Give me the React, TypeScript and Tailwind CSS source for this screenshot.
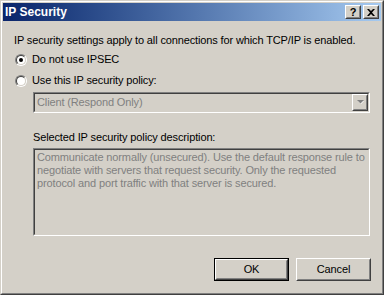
import React from "react";

function Raised({ children, className = "" }: { children?: React.ReactNode; className?: string }) {
  return (
    <div className={`border border-t-white border-l-white border-b-[#404040] border-r-[#404040] bg-[#d4d0c8] ${className}`}>
      <div className="w-full h-full border border-t-[#d4d0c8] border-l-[#d4d0c8] border-b-[#808080] border-r-[#808080] flex items-center justify-center">
        {children}
      </div>
    </div>
  );
}

function Sunken({ children, className = "" }: { children?: React.ReactNode; className?: string }) {
  return (
    <div className={`border border-t-[#808080] border-l-[#808080] border-b-white border-r-white ${className}`}>
      <div className="w-full h-full border border-t-[#404040] border-l-[#404040] border-b-[#d4d0c8] border-r-[#d4d0c8] bg-[#d4d0c8]">
        {children}
      </div>
    </div>
  );
}

function Radio({ checked }: { checked?: boolean }) {
  return (
    <div className="w-[12px] h-[12px] rounded-full border border-t-[#808080] border-l-[#808080] border-b-white border-r-white">
      <div className="w-full h-full rounded-full border border-t-[#404040] border-l-[#404040] border-b-[#d4d0c8] border-r-[#d4d0c8] bg-white flex items-center justify-center">
        {checked && <div className="w-[4px] h-[4px] rounded-full bg-black" />}
      </div>
    </div>
  );
}

export default function App() {
  return (
    <div
      className="w-[384px] h-[295px] border border-t-[#d4d0c8] border-l-[#d4d0c8] border-b-[#404040] border-r-[#404040] bg-[#d4d0c8] text-[11px] leading-[13px] tracking-[-0.13px] text-black"
      style={{ fontFamily: '"Liberation Sans", Arial, sans-serif' }}
    >
      <div className="w-full h-full border border-t-white border-l-white border-b-[#808080] border-r-[#808080] p-px flex flex-col">
        {/* Title bar */}
        <div className="h-[18px] flex items-start justify-between bg-gradient-to-r from-[#0a246a] to-[#a6caf0] pl-[2px] pr-[2px] pt-[2px]">
          <span className="text-white font-bold text-[12px] leading-[14px] tracking-normal">IP Security</span>
          <div className="flex gap-[2px]">
            <Raised className="w-[16px] h-[14px]">
              <span className="font-bold text-[11px] leading-[10px]">?</span>
            </Raised>
            <Raised className="w-[16px] h-[14px]">
              <svg width="8" height="7" viewBox="0 0 8 7">
                <path d="M0 0h2l2 2 2-2h2L5 3.5 8 7H6L4 5 2 7H0l3-3.5z" fill="black" />
              </svg>
            </Raised>
          </div>
        </div>

        {/* Body */}
        <div className="flex flex-col px-[11px]">
          <div className="mt-[13px] h-[13px] whitespace-nowrap">
            IP security settings apply to all connections for which TCP/IP is enabled.
          </div>

          <div className="mt-[6px] h-[13px] flex items-center">
            <div className="ml-[1px]">
              <Radio checked />
            </div>
            <span className="ml-[5px]">Do not use IPSEC</span>
          </div>

          <div className="mt-[8px] h-[13px] flex items-center">
            <div className="ml-[1px]">
              <Radio />
            </div>
            <span className="ml-[5px]">Use this IP security policy:</span>
          </div>

          <Sunken className="mt-[5px] ml-[19px] h-[21px]">
            <div className="flex h-full items-center">
              <span className="flex-1 pl-[2px] text-[#808080]">Client (Respond Only)</span>
              <Raised className="w-[16px] h-[17px]">
                <svg width="7" height="5" viewBox="0 0 7 5">
                  <path d="M1 1h6L4 4z" fill="white" />
                  <path d="M0 0h7L3.5 3.5z" fill="#808080" />
                </svg>
              </Raised>
            </div>
          </Sunken>

          <div className="mt-[18px] ml-[19px] h-[13px]">Selected IP security policy description:</div>

          <Sunken className="mt-[4px] ml-[19px] h-[88px]">
            <div className="px-[2px] pt-px text-[#808080] whitespace-nowrap">
              Communicate normally (unsecured). Use the default response rule to
              <br />
              negotiate with servers that request security. Only the requested
              <br />
              protocol and port traffic with that server is secured.
            </div>
          </Sunken>

          <div className="mt-[22px] flex justify-end gap-[7px] -mr-[1px]">
            <div className="w-[75px] h-[23px] border border-black">
              <Raised className="w-full h-full">OK</Raised>
            </div>
            <Raised className="w-[75px] h-[23px]">Cancel</Raised>
          </div>
        </div>
      </div>
    </div>
  );
}
